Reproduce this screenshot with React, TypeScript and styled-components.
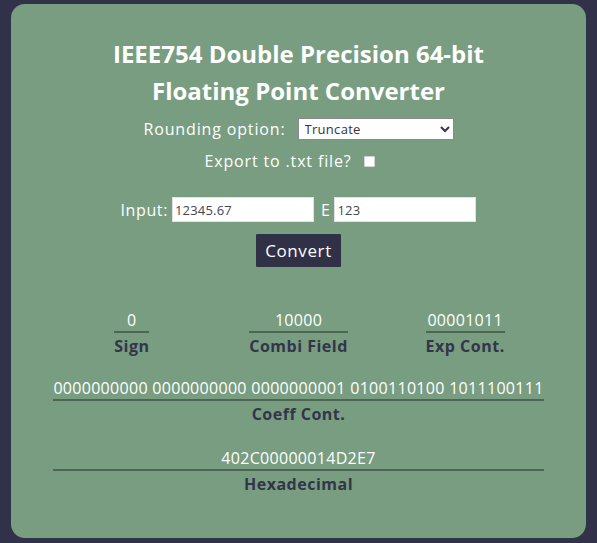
import React from "react";
import styled, { createGlobalStyle } from "styled-components";

const GlobalStyle = createGlobalStyle`
    html, body {
        margin: 0;
        padding: 0;
        background: #31324a;
    }
    body {
        font-family: "Open Sans", "DejaVu Sans", sans-serif;
    }
`;

const App: React.FC = () => {
    return (
        <>
            <GlobalStyle />
            <Page>
                <Card>
                    <Title>
                        IEEE754 Double Precision 64-bit
                        <br />
                        Floating Point Converter
                    </Title>
                    <OptionRow $top={9} $gap={12}>
                        Rounding option:
                        <Select defaultValue="truncate">
                            <option value="truncate">Truncate</option>
                            <option value="floor">Round down</option>
                            <option value="ceil">Round up</option>
                            <option value="nearest">Round to nearest</option>
                        </Select>
                    </OptionRow>
                    <OptionRow $top={10} $gap={12} $padRight={18}>
                        Export to .txt file?
                        <Checkbox type="checkbox" />
                    </OptionRow>
                    <InputRow>
                        <span>Input:</span>
                        <NumberInput defaultValue="12345.67" $width={142} />
                        <ExpMark>E</ExpMark>
                        <NumberInput defaultValue="123" $width={142} />
                    </InputRow>
                    <ConvertButton>Convert</ConvertButton>
                    <FieldRow>
                        <FieldCell>
                            <Field>
                                <Value>0</Value>
                                <Label>Sign</Label>
                            </Field>
                        </FieldCell>
                        <FieldCell>
                            <Field>
                                <Value>10000</Value>
                                <Label>Combi Field</Label>
                            </Field>
                        </FieldCell>
                        <FieldCell>
                            <Field>
                                <Value>00001011</Value>
                                <Label>Exp Cont.</Label>
                            </Field>
                        </FieldCell>
                    </FieldRow>
                    <WideBlock>
                        <Value>0000000000 0000000000 0000000001 0100110100 1011100111</Value>
                        <Label>Coeff Cont.</Label>
                        <Value $top={20}>402C00000014D2E7</Value>
                        <Label>Hexadecimal</Label>
                    </WideBlock>
                </Card>
            </Page>
        </>
    );
};

const Page = styled.div`
    padding: 4px 11px 5px;
`;

const Card = styled.main`
    display: flex;
    flex-direction: column;
    align-items: center;
    box-sizing: border-box;
    height: 534px;
    padding-top: 31px;
    background: #789d80;
    border-radius: 14px;
    color: #ffffff;
`;

const Title = styled.h1`
    margin: 0;
    font-size: 24px;
    font-weight: 700;
    line-height: 37px;
    text-align: center;
`;

const OptionRow = styled.label<{ $top: number; $gap: number; $padRight?: number }>`
    display: flex;
    align-items: center;
    gap: ${({ $gap }) => $gap}px;
    margin-top: ${({ $top }) => $top}px;
    padding-right: ${({ $padRight }) => $padRight ?? 0}px;
    font-size: 16px;
    line-height: 22px;
    letter-spacing: 0.85px;
`;

const Select = styled.select`
    width: 156px;
    height: 22px;
    padding: 0 2px;
    border: 1px solid #8a8a8a;
    border-radius: 0;
    background: #ffffff;
    color: #333346;
    font-family: inherit;
    font-size: 13px;
    letter-spacing: 0.3px;
`;

const Checkbox = styled.input`
    appearance: none;
    box-sizing: border-box;
    width: 11px;
    height: 11px;
    margin: 0;
    border: 1px solid #d4d4d4;
    border-radius: 1px;
    background: #ffffff;
`;

const InputRow = styled.div`
    display: flex;
    align-items: center;
    gap: 4px;
    margin-top: 25px;
    font-size: 16px;
    letter-spacing: 0.6px;
`;

const ExpMark = styled.span`
    margin-left: 3px;
`;

const NumberInput = styled.input<{ $width: number }>`
    box-sizing: border-box;
    width: ${({ $width }) => $width}px;
    height: 25px;
    padding: 0 2px;
    border: 1px solid #e2e2e2;
    background: #ffffff;
    color: #444454;
    font-family: inherit;
    font-size: 13px;
    letter-spacing: 0.2px;
`;

const ConvertButton = styled.button`
    margin-top: 12px;
    width: 85px;
    height: 33px;
    border: none;
    border-radius: 1px;
    background: #303047;
    color: #ffffff;
    font-family: inherit;
    font-size: 17px;
    letter-spacing: 0.6px;
    cursor: pointer;
`;

const FieldRow = styled.div`
    display: flex;
    width: 500px;
    margin-top: 42px;
`;

const FieldCell = styled.div`
    flex: 1;
    display: flex;
    justify-content: center;
`;

const Field = styled.div`
    display: inline-flex;
    flex-direction: column;
    text-align: center;
`;

const Value = styled.div<{ $top?: number }>`
    margin-top: ${({ $top }) => $top ?? 0}px;
    border-bottom: 2px solid #4d6553;
    font-size: 16px;
    line-height: 22px;
    letter-spacing: 0.3px;
    color: #ffffff;
    white-space: nowrap;
`;

const Label = styled.div`
    font-size: 16px;
    font-weight: 700;
    line-height: 26px;
    letter-spacing: 0.5px;
    color: #33354a;
`;

const WideBlock = styled.div`
    display: inline-flex;
    flex-direction: column;
    margin-top: 18px;
    text-align: center;
`;

export default App;
